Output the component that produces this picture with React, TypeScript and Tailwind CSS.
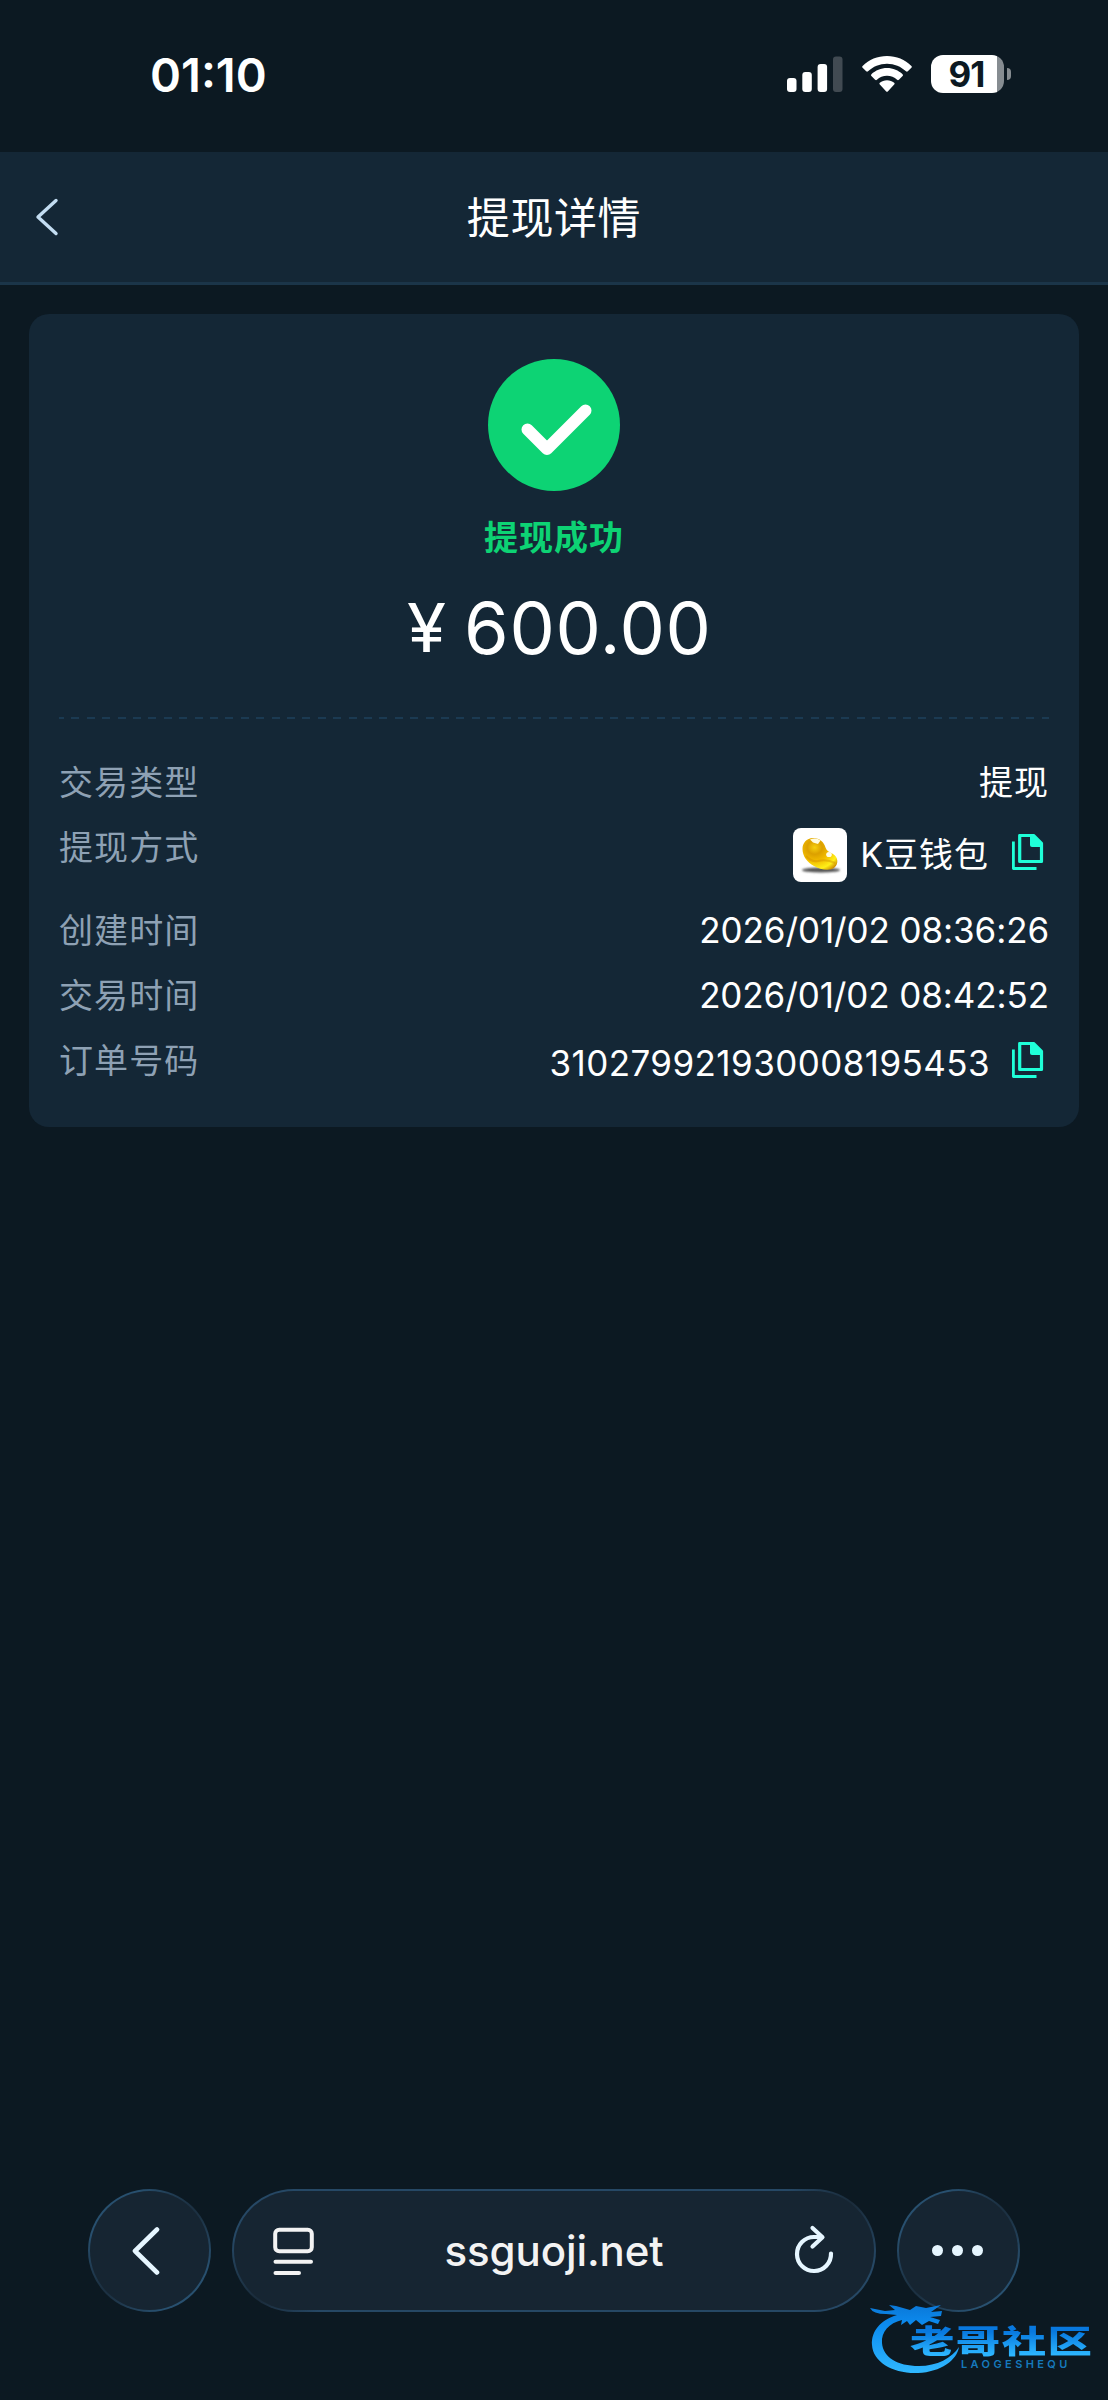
import type { ReactNode } from "react";

const CREATED_AT = "2026/01/02 08:36:26";
const TRADED_AT = "2026/01/02 08:42:52";
const ORDER_NO = "310279921930008195453";

const GLASS =
  "border-2 border-transparent rounded-full [background:linear-gradient(#162532,#162532)_padding-box,radial-gradient(circle_at_92%_12%,#1a2b3a_0,#1a2b3a00_64px)_border-box,radial-gradient(circle_at_8%_88%,#1a2b3a_0,#1a2b3a00_64px)_border-box,linear-gradient(#28506f,#28506f)_border-box]";

const PILL =
  "border-2 border-transparent rounded-full [background:linear-gradient(#162532,#162532)_padding-box,radial-gradient(circle_at_96%_12%,#1a2b3a_0,#1a2b3a00_64px)_border-box,radial-gradient(circle_at_4%_88%,#1a2b3a_0,#1a2b3a00_64px)_border-box,linear-gradient(#264865,#264865)_border-box]";

function StatusBar() {
  return (
    <div className="flex h-[152px] items-start justify-between pl-[150px] pr-[97px] pt-[50px] text-white">
      <span className="text-[47px] font-[580] leading-[50px]">01:10</span>
      <div className="flex items-start pt-[5px]">
        <svg width="56" height="38" viewBox="0 0 56 38" className="mr-[19px]">
          <rect x="0" y="23" width="9.5" height="14" rx="3" fill="#fff" />
          <rect x="15.3" y="17" width="9.5" height="20" rx="3" fill="#fff" />
          <rect x="30.6" y="9" width="9.5" height="28" rx="3" fill="#fff" />
          <rect x="46" y="1.5" width="9.5" height="35.5" rx="3" fill="#414a52" />
        </svg>
        <svg width="50" height="38" viewBox="0 0 50 38" className="mr-[19px]">
          <path d="M25 1C15.600 1 6.900 4.700.6 10.900q-.9.900 0 1.800l3.600 3.600q.9.900 1.800 0C11 11.500 17.700 8.700 25 8.700s14 2.800 19 7.600q.9.900 1.800 0l3.600-3.600q.9-.9 0-1.800C43.100 4.700 34.400 1 25 1Z" fill="#fff" />
          <path d="M25 13c-6 0-11.500 2.400-15.600 6.200q-.9.900 0 1.800l3.700 3.700q.9.900 1.800.1c2.700-2.500 6.200-4 10.100-4s7.400 1.500 10.100 4q.9.800 1.800-.1l3.700-3.700q.9-.9 0-1.800C36.500 15.400 31 13 25 13Z" fill="#fff" />
          <path d="M25 25.200c-2.800 0-5.200.9-7.200 2.500q-1 .9 0 1.900l6.200 6.700q1 1 2 0l6.200-6.700q1-1 0-1.900c-2-1.600-4.400-2.500-7.200-2.500Z" fill="#fff" />
        </svg>
        <div className="h-[38px] w-[73px] rounded-[12px] bg-[linear-gradient(90deg,#fff_66px,#868c91_66px)] pr-[2px] text-center text-[35px] font-bold leading-[39px] tracking-[-0.8px] text-[#0c1922]">
          91
        </div>
        <div className="ml-[3px] mt-[13px] h-[12px] w-[4px] rounded-r-full bg-[#868c91]" />
      </div>
    </div>
  );
}

function CopyIcon() {
  return (
    <svg width="32" height="36" viewBox="0 0 32 36" fill="none" stroke="#1fffd8">
      <path d="M7.700 1.500H21.500L29.500 9.500V27.500H7.700Z" strokeWidth="3.200" strokeLinejoin="round" />
      <path d="M18 1H22.200L30 9V13H20Q18 13 18 11Z" fill="#1fffd8" stroke="none" />
      <path d="M1.400 7.500V34.500H24.500" strokeWidth="2.800" strokeLinejoin="round" />
    </svg>
  );
}

function BeanIcon() {
  return (
    <svg width="54" height="54" viewBox="0 0 54 54" className="rounded-[8px] bg-white">
      <defs>
        <radialGradient id="bean" cx="0.35" cy="0.3" r="0.85">
          <stop offset="0" stopColor="#f6d010" />
          <stop offset="0.25" stopColor="#dca000" />
          <stop offset="0.5" stopColor="#f2bc00" />
          <stop offset="0.8" stopColor="#fff018" />
          <stop offset="1" stopColor="#c98400" />
        </radialGradient>
        <filter id="soft" x="-20%" y="-100%" width="140%" height="300%">
          <feGaussianBlur stdDeviation="1.300" />
        </filter>
      </defs>
      <ellipse cx="28" cy="42" rx="19" ry="2.600" fill="#555" filter="url(#soft)" />
      <path d="M20 10C13.500 10 9.500 15 9.500 21C9.500 28 14 34 21 38C27 41.500 37 43.500 41.500 39.500C46 35.500 45 29 40 26C36.500 24 34 23.500 32.500 19.500C31 14 26.500 10 20 10Z" fill="url(#bean)" />
      <path d="M13 28Q18 34 25 33Q34 31 42 35" fill="none" stroke="#cc8a00" strokeWidth="2" opacity="0.400" />
      <path d="M17 11.500Q23 9 27.500 12.500L25 16L20 14.500Z" fill="#fffbe0" />
      <ellipse cx="36" cy="26.500" rx="2.800" ry="2.600" fill="#fffce8" />
    </svg>
  );
}

function Row({ label, children, className = "h-12" }: { label: string; children: ReactNode; className?: string }) {
  return (
    <div className={`flex items-start justify-between ${className}`}>
      <span className="text-[34px] leading-[52px] tracking-[1.1px] text-[#8ea1b4]">{label}</span>
      {children}
    </div>
  );
}

function DetailCard() {
  return (
    <section className="mx-[29px] mt-[29px] h-[813px] rounded-[20px] bg-[#142736] px-[30px] pt-[45px]">
      <div className="flex flex-col items-center">
        <div className="flex h-[132px] w-[132px] items-center justify-center rounded-full bg-[#0dd374]">
          <svg width="132" height="132" viewBox="0 0 132 132" fill="none">
            <path d="M39.500 70.500L59 90L97.500 51.500" stroke="#fff" strokeWidth="12" strokeLinecap="round" strokeLinejoin="round" />
          </svg>
        </div>
        <p className="mt-[23px] text-[34px] font-bold leading-[48px] tracking-[1px] text-[#0dd374]">提现成功</p>
        <p className="mt-[24px] flex h-[84px] items-center pl-[12px] text-white">
          <span className="mr-[19px] origin-center scale-x-[1.06] text-[67px] leading-[84px]">¥</span>
          <span className="text-[72px] leading-[84px] tracking-[0.7px]">600.00</span>
        </p>
      </div>

      <div className="mt-[47px] h-[2px] bg-[repeating-linear-gradient(90deg,#1b3a52_0,#1b3a52_5px,transparent_5px,transparent_12.4px,#1b3a52_12.4px,#1b3a52_15.4px)]" />

      <div className="mt-[38px] flex flex-col gap-[17px] text-white">
        <Row label="交易类型">
          <span className="text-[34px] leading-[52px] tracking-[1px]">提现</span>
        </Row>
        <Row label="提现方式" className="h-[66px]">
          <div className="flex h-[66px] items-center">
            <BeanIcon />
            <span className="ml-[13px] text-[34px] leading-[48px] tracking-[1px]">K豆钱包</span>
            <span className="mb-[7px] ml-[23px] mr-[5px]">
              <CopyIcon />
            </span>
          </div>
        </Row>
        <Row label="创建时间">
          <span className="text-[35px] leading-[50px] tracking-[-0.1px]">{CREATED_AT}</span>
        </Row>
        <Row label="交易时间">
          <span className="text-[35px] leading-[50px] tracking-[-0.1px]">{TRADED_AT}</span>
        </Row>
        <Row label="订单号码">
          <div className="flex h-[50px] items-center">
            <span className="pt-[6px] text-[35px] leading-[48px] tracking-[0.42px]">{ORDER_NO}</span>
            <span className="ml-[22px] mr-[5px]">
              <CopyIcon />
            </span>
          </div>
        </Row>
      </div>
    </section>
  );
}

function BrowserBar() {
  return (
    <nav className="mb-[88px] ml-[88px] flex h-[123px]">
      <div className={`flex w-[123px] items-center justify-center ${GLASS}`}>
        <svg width="28" height="48" viewBox="0 0 28 48" fill="none" className="mr-[8px]">
          <path d="M25 2.500L3 24L25 45.500" stroke="#e6f6ff" strokeWidth="4.600" strokeLinecap="round" strokeLinejoin="round" />
        </svg>
      </div>
      <div className={`ml-[21px] flex w-[644px] items-center justify-between pl-[39px] pr-[39px] ${PILL}`}>
        <svg width="42" height="48" viewBox="0 0 42 48" fill="none" stroke="#f3f3f3" strokeLinecap="round">
          <rect x="2.200" y="2.700" width="36.600" height="21.600" rx="4" strokeWidth="4" />
          <path d="M2.500 34.800H38M2.500 46H26" strokeWidth="4" />
        </svg>
        <span className="text-[42px] font-medium leading-[52px] tracking-[-0.1px] text-[#f3f3f3]">ssguoji.net</span>
        <svg width="42" height="51" viewBox="0 0 42 51" fill="none" stroke="#e6f6ff" strokeWidth="4.200" strokeLinecap="round" strokeLinejoin="round">
          <path d="M28.500 12H21A17 17 0 1 0 38 28.500" />
          <path d="M19.500 3L29.500 12.200L19.500 21.500" />
        </svg>
      </div>
      <div className={`ml-[21px] flex w-[123px] items-center justify-center gap-[9px] pr-[2px] ${GLASS}`}>
        <i className="h-[11px] w-[11px] rounded-full bg-[#e6f6ff]" />
        <i className="h-[11px] w-[11px] rounded-full bg-[#e6f6ff]" />
        <i className="h-[11px] w-[11px] rounded-full bg-[#e6f6ff]" />
      </div>
    </nav>
  );
}

function Watermark() {
  return (
    <div className="absolute bottom-0 right-0 h-[100px] w-[240px]">
      <svg width="100" height="76" viewBox="0 0 100 76" className="absolute left-0 top-0">
        <defs>
          <linearGradient id="dragon" x1="0" y1="0" x2="0" y2="1">
            <stop offset="0" stopColor="#0a78d8" />
            <stop offset="0.3" stopColor="#0c8cf0" />
            <stop offset="1" stopColor="#30b8ff" />
          </linearGradient>
        </defs>
        <path
          d="M29 15C12 20 3 32 4 45C5 62 25 74 50 73C73 72 89 60 91 47C84 58 69 66 51 66C29 66 15 57 14 43C13 32 21 23 34 20L33 25L39 21L42 25L48 20L54 25L61 21L70 24L72 20L62 17L73 16L74 11L63 12L73 5L58 8L48 6L42 10L28 6L21 5L27 10L17 11L2 8Q5 14 18 14Z"
          fill="url(#dragon)"
        />
      </svg>
      <div className="absolute left-[42px] top-[25px] flex flex-col">
        <span className="h-[33px] w-[133px] origin-left scale-x-[1.41] whitespace-nowrap bg-gradient-to-b from-[#0878de] from-20% to-[#2db6ff] to-90% bg-clip-text text-[31.500px] font-black leading-[34px] tracking-[1px] text-transparent">
          老哥社区
        </span>
        <span className="ml-[51px] h-[12px] text-[11px] font-semibold leading-[12px] tracking-[3.4px] text-[#1679bd]">LAOGESHEQU</span>
      </div>
    </div>
  );
}

export default function App() {
  return (
    <main
      lang="zh-CN"
      className="relative flex h-[2400px] w-[1108px] flex-col overflow-hidden bg-[#0c1922] font-[Inter,'Noto_Sans_CJK_SC',sans-serif]"
    >
      <StatusBar />

      <header className="flex h-[133px] items-center justify-between border-b-[3px] border-[#1b3549] bg-[#142736] pl-[35px] pr-[35px]">
        <svg width="24" height="38" viewBox="0 0 24 38" fill="none">
          <path d="M21 2.500L3 19L21 35.500" stroke="#c3ddf2" strokeWidth="3.400" strokeLinecap="round" strokeLinejoin="round" />
        </svg>
        <h1 className="pt-[1px] text-[43px] leading-[60px] tracking-[0.6px] text-white">提现详情</h1>
        <span className="w-6" />
      </header>

      <DetailCard />

      <div className="flex-1" />

      <BrowserBar />
      <Watermark />
    </main>
  );
}
